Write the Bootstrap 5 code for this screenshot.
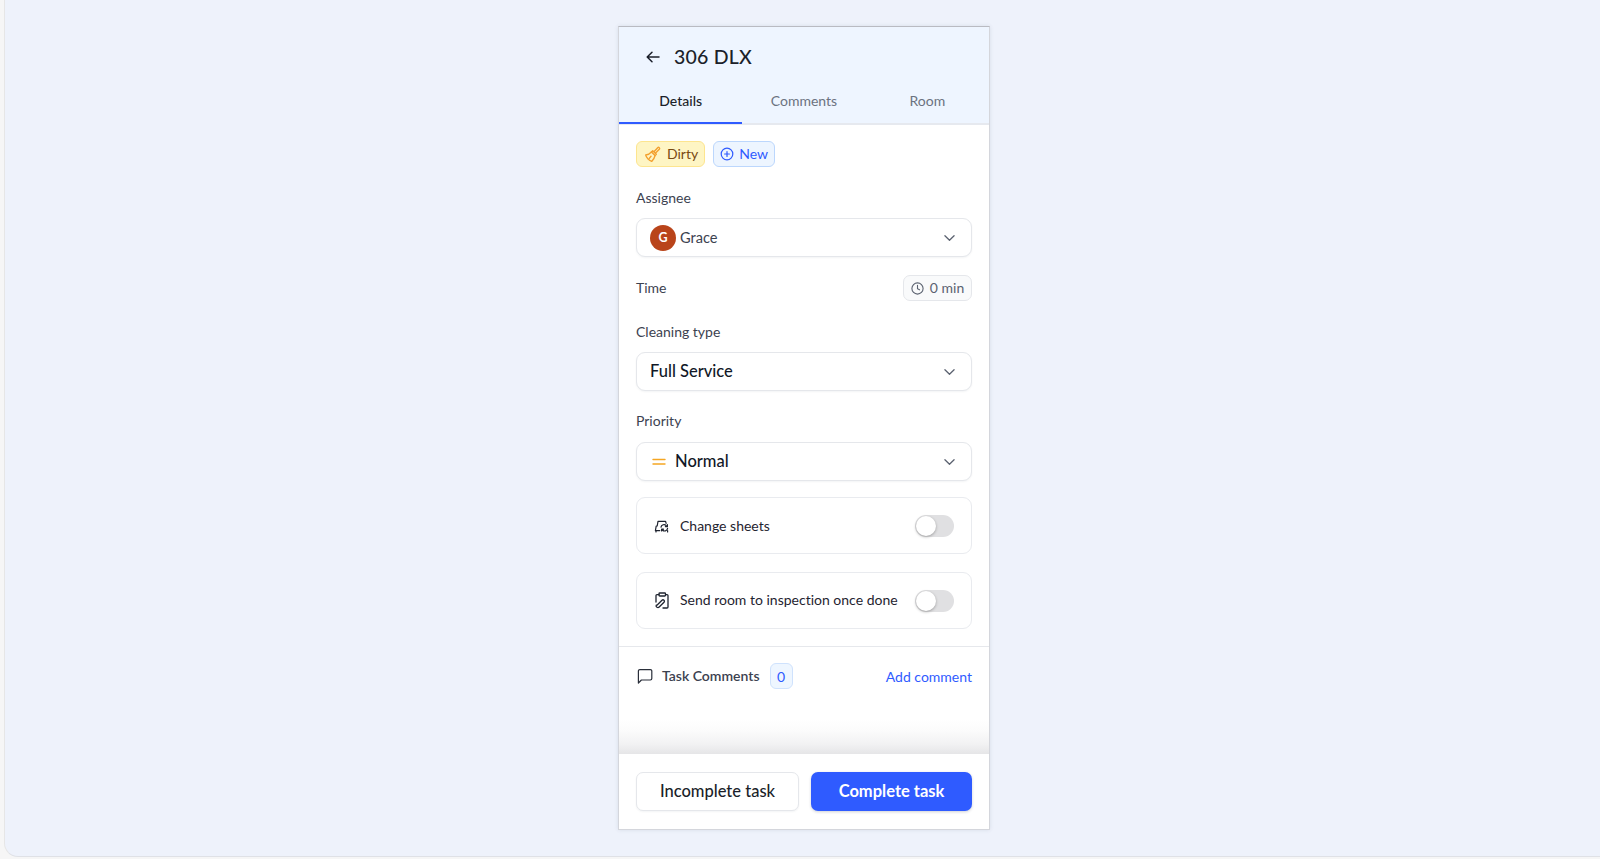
<!doctype html>
<html lang="en"><head><meta charset="utf-8"><title>306 DLX</title>
<link href="https://cdn.jsdelivr.net/npm/bootstrap@5.3.0/dist/css/bootstrap.min.css" rel="stylesheet">
<style>
html,body{height:100%;overflow:hidden}
body{background:#f6f6f6;font-family:"Lato","Noto Sans",sans-serif;color:#1b1f2a;font-variant-ligatures:none}
.shell{height:857px;margin-left:4px;background:#eef2fb;border-bottom-left-radius:14px;border-left:1px solid #e6e6e6;border-bottom:1px solid #dfe1e6;padding-top:26px}
.phone{width:372px;height:804px;margin-left:613px;background:#fff;border:1px solid #d4d6dc;border-top-color:#b9bbc2;box-shadow:0 0 4px rgba(60,70,100,.12)}
.head{background:#eef5ff;height:98px;border-bottom:2px solid #e6e9ef}
.titlerow{height:60px;padding-left:26px;gap:13px}
.titlerow h1{font-size:19.5px;font-weight:500;margin:0;letter-spacing:.2px}
.tabrow>a{flex:1 1 0;height:37px;font-size:14px;color:#6b7280;text-decoration:none;display:flex;align-items:center;justify-content:center;padding-bottom:9px;border-bottom:2px solid transparent}
.tabrow>a.on{color:#1b1f2a;font-weight:500;border-bottom-color:#2f5bff}
.body-pane{padding:16px 17px 0;height:521px}
.chip{height:26px;border-radius:6px;border:1px solid;font-size:14px;padding:0 6px;gap:5px}
.chip.dirty{background:#fef5c4;border-color:#fde58f;color:#7a4a12;padding-left:7px;gap:6px}
.chip.fresh{background:#edf5ff;border-color:#bcd7fd;color:#2f5bff}
.lbl{font-size:14px;color:#3c4250;line-height:20px}
.grace{font-size:14.6px}
.picker{height:39px;border:1px solid #e5e7eb;border-radius:9px;background:#fff;box-shadow:0 1px 2px rgba(20,30,50,.05);padding:0 16px 0 13px}
.picker .val{font-size:16.5px;font-weight:500;color:#111827}
.avatar{width:26px;height:26px;border-radius:50%;background:#b9441a;color:#fff;font-size:12.5px;font-weight:700;padding-top:1px}
.timechip{height:26px;width:69px;border:1px solid #e5e7eb;border-radius:7px;background:#f9fafb;font-size:14px;color:#5b6270;gap:6px}
.optbox{height:57px;border:1px solid #e9ebef;border-radius:9px;padding:0 17px;font-size:14px;color:#1f2430}
.switchy{width:39px;height:22px;border-radius:11px;background:#e0e0e2;position:relative}
.switchy::after{content:"";position:absolute;left:1px;top:1px;width:20px;height:20px;border-radius:50%;background:#fff;box-shadow:0 1px 3px rgba(0,0,0,.3)}
.commentrow{border-top:1px solid #e6e8ec;height:108px;padding:16px 17px 0;background:linear-gradient(to bottom,#fff 72px,#fbfbfb 84px,#f2f2f3 97px,#e4e4e6 108px)}
.countchip{width:23px;height:26px;border:1px solid #cfe2fd;border-radius:6px;background:#eef6ff;color:#2f5bff;font-size:14px}
.addlink{color:#2f5bff;text-decoration:none;font-size:14px}
.foot{padding:18px 17px 0;gap:12px}
.btn-ghosty,.btn-solid{flex:1 1 0;height:39px;border-radius:7px;font-size:16.5px;display:flex;align-items:center;justify-content:center;font-weight:500}
.btn-ghosty{background:#fff;border:1px solid #e5e7eb;color:#1b1f2a;box-shadow:0 1px 2px rgba(20,30,50,.05)}
.btn-solid{background:#2f5bff;border:0;color:#fff;font-weight:700;box-shadow:0 1px 3px rgba(20,30,50,.2)}
.gap-10{margin-right:10px}
.nudge-up{padding-bottom:2px}
</style></head>
<body>
<div class="shell">
<div class="phone d-flex flex-column">
  <div class="head">
    <div class="titlerow d-flex align-items-center">
      <svg width="16" height="16" viewBox="0 0 16 16" fill="none" stroke="#1b1f2a" stroke-width="1.5" stroke-linecap="round" stroke-linejoin="round"><path d="M14 8H2.5M7 3.2 2.2 8 7 12.8"/></svg>
      <h1>306 DLX</h1>
    </div>
    <div class="tabrow d-flex">
      <a class="on" href="#">Details</a><a href="#">Comments</a><a href="#">Room</a>
    </div>
  </div>
  <div class="body-pane">
    <div class="d-flex gap-2">
      <span class="chip dirty d-inline-flex align-items-center">
        <svg width="17" height="17" viewBox="0 0 16 16" fill="none" stroke="#f3a02e" stroke-width="1.3" stroke-linejoin="round" stroke-linecap="round"><path d="M9.6 5.2 12.9 1.6a1 1 0 0 1 1.5 1.4L10.9 6.5"/><path d="M8.2 4.4l3.4 3.4-1.2 1.2L7 5.6z"/><path d="M7 5.6C5.5 7.3 3.6 8.2 1.6 8.5c.8 2.6 3 4.9 5.6 6 1.5-1.6 2.8-3.5 3.2-5.5"/><path d="M5 11.6l1.6-2"/></svg>
        <span class="nudge-up">Dirty</span></span>
      <span class="chip fresh d-inline-flex align-items-center">
        <svg width="14" height="14" viewBox="0 0 14 14" fill="none" stroke="#2f5bff" stroke-width="1.2" stroke-linecap="round"><circle cx="7" cy="7" r="5.8"/><path d="M7 4.6v4.8M4.6 7h4.8"/></svg>
        <span class="nudge-up">New</span></span>
    </div>
    <div class="lbl" style="margin-top:21px">Assignee</div>
    <div class="picker d-flex align-items-center" style="margin-top:10px">
      <span class="avatar d-flex align-items-center justify-content-center">G</span>
      <span class="lbl grace ms-1 flex-grow-1">Grace</span>
      <svg width="11" height="8" viewBox="0 0 12 8" fill="none" stroke="#5b6270" stroke-width="1.4" stroke-linecap="round" stroke-linejoin="round"><path d="M1 1.5 6 6.5l5-5"/></svg>
    </div>
    <div class="d-flex align-items-center justify-content-between" style="margin-top:18px">
      <span class="lbl">Time</span>
      <span class="timechip d-flex align-items-center justify-content-center">
        <svg width="13" height="13" viewBox="0 0 13 13" fill="none" stroke="#5b6270" stroke-width="1.1" stroke-linecap="round"><circle cx="6.5" cy="6.5" r="5.6"/><path d="M6.5 3.2v3.4l2 1.2"/></svg>
        <span class="nudge-up">0 min</span></span>
    </div>
    <div class="lbl" style="margin-top:21px">Cleaning type</div>
    <div class="picker d-flex align-items-center" style="margin-top:10px">
      <span class="val flex-grow-1">Full Service</span>
      <svg width="11" height="8" viewBox="0 0 12 8" fill="none" stroke="#5b6270" stroke-width="1.4" stroke-linecap="round" stroke-linejoin="round"><path d="M1 1.5 6 6.5l5-5"/></svg>
    </div>
    <div class="lbl" style="margin-top:20px">Priority</div>
    <div class="picker d-flex align-items-center" style="margin-top:11px">
      <svg width="17" height="8" viewBox="0 0 17 8" fill="none" stroke="#f5a623" stroke-width="1.4" stroke-linecap="round" style="margin-left:1px;margin-right:7px"><path d="M2 1.5h12M2 6h12"/></svg>
      <span class="val flex-grow-1">Normal</span>
      <svg width="11" height="8" viewBox="0 0 12 8" fill="none" stroke="#5b6270" stroke-width="1.4" stroke-linecap="round" stroke-linejoin="round"><path d="M1 1.5 6 6.5l5-5"/></svg>
    </div>
    <div class="optbox d-flex align-items-center" style="margin-top:16px">
      <svg class="gap-10" width="16" height="16" viewBox="0 0 16 16" fill="none" stroke="#1f2430" stroke-width="1.2" stroke-linecap="round" stroke-linejoin="round"><path d="M3.2 8 4 3.4h7.6l.5 2M2.2 8.2 1.4 12.6h4.4M2 12.6v1.4M13.6 12.6V14"/><path d="M7 9.2a3 3 0 0 1 5.2-1.6l1.2 1M13.4 6.6v2H11.4M13.6 10.4a3 3 0 0 1-5.2 1.6l-.8-.8M7.6 13v-1.8h1.9"/></svg>
      <span class="flex-grow-1">Change sheets</span><span class="switchy"></span>
    </div>
    <div class="optbox d-flex align-items-center" style="margin-top:18px">
      <svg class="gap-10" width="16" height="18" viewBox="0 0 16 18" fill="none" stroke="#1f2430" stroke-width="1.3" stroke-linecap="round" stroke-linejoin="round"><rect x="5" y="1" width="6.5" height="3" rx=".8"/><path d="M5 2.6H3a1 1 0 0 0-1 1V10M11.5 2.6h1.5a1 1 0 0 1 1 1V15a1 1 0 0 1-1 1H9"/><path d="M3.2 13 8 8.2a1.4 1.4 0 0 1 2 2L5.2 15a1.8 1.8 0 0 1-3-1.8z"/></svg>
      <span class="flex-grow-1 nudge-up">Send room to inspection once done</span><span class="switchy"></span>
    </div>
  </div>
  <div class="commentrow d-flex align-items-start justify-content-between">
    <div class="d-flex align-items-center">
      <svg class="me-2" width="16" height="16" viewBox="0 0 16 16" fill="none" stroke="#2a2f3a" stroke-width="1.2" stroke-linejoin="round" style="margin-left:1px"><path d="M1.4 15V3a1.4 1.4 0 0 1 1.4-1.4h10.6A1.4 1.4 0 0 1 14.8 3v7.6a1.4 1.4 0 0 1-1.4 1.4H4.4z"/></svg>
      <span class="lbl fw-semibold" style="margin-left:1px;margin-right:10px">Task Comments</span>
      <span class="countchip d-flex align-items-center justify-content-center">0</span>
    </div>
    <a class="addlink lh-lg" href="#">Add comment</a>
  </div>
  <div class="foot d-flex">
    <button class="btn-ghosty" type="button">Incomplete task</button>
    <button class="btn-solid" type="button">Complete task</button>
  </div>
</div>
</div>
</body></html>
